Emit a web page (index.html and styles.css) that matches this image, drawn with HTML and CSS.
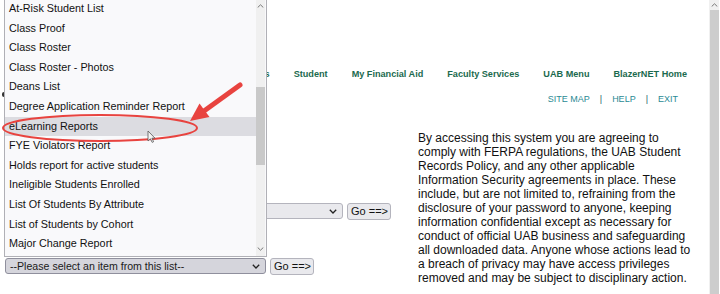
FILE: index.html
```html
<!DOCTYPE html>
<html>
    <head>
        <meta charset="utf-8">
        <link rel="stylesheet" href="styles.css">
    </head>
    <body>
        <div id="window">
            <div id="page">
                <div class="nav-row">
                    <a class="nav-link">Employee Services</a>
                    <a class="nav-link">Student</a>
                    <a class="nav-link">My Financial Aid</a>
                    <a class="nav-link">Faculty Services</a>
                    <a class="nav-link">UAB Menu</a>
                    <a class="nav-link">BlazerNET Home</a>
                </div>
                <div class="sub-row">
                    <div class="site-title"></div>
                    <div class="util-links">
                        <a>SITE MAP</a><span class="sep">|</span><a>HELP</a><span class="sep">|</span><a>EXIT</a>
                    </div>
                </div>
                <div class="main">
                    <div class="forms">
                        <div class="form-row first">
                            <div class="select wide">
                                <span></span>
                                <svg class="chev" width="8" height="5" viewBox="0 0 8 5"><path d="M0.8 0.8 L4 4 L7.2 0.8" fill="none" stroke="#222" stroke-width="1.3"/></svg>
                            </div>
                            <button class="go">Go ==&gt;</button>
                        </div>
                        <div class="form-row second">
                            <div class="select open">
                                <span>--Please select an item from this list--</span>
                                <svg class="chev" width="8" height="5" viewBox="0 0 8 5"><path d="M0.8 0.8 L4 4 L7.2 0.8" fill="none" stroke="#222" stroke-width="1.3"/></svg>
                            </div>
                            <button class="go">Go ==&gt;</button>
                        </div>
                    </div>
                    <p class="notice">By accessing this system you are agreeing to comply with FERPA regulations, the UAB Student Records Policy, and any other applicable Information Security agreements in place. These include, but are not limited to, refraining from the disclosure of your password to anyone, keeping information confidential except as necessary for conduct of official UAB business and safeguarding all downloaded data. Anyone whose actions lead to a breach of privacy may have access privileges removed and may be subject to disciplinary action.</p>
                </div>

                <!-- open dropdown of the second select -->
                <div class="dropdown">
                    <ul class="options">
                        <li>At-Risk Student List</li>
                        <li>Class Proof</li>
                        <li>Class Roster</li>
                        <li>Class Roster - Photos</li>
                        <li>Deans List</li>
                        <li>Degree Application Reminder Report</li>
                        <li class="hover">eLearning Reports</li>
                        <li>FYE Violators Report</li>
                        <li>Holds report for active students</li>
                        <li>Ineligible Students Enrolled</li>
                        <li>List Of Students By Attribute</li>
                        <li>List of Students by Cohort</li>
                        <li>Major Change Report</li>
                    </ul>
                    <div class="dd-scroll">
                        <div class="dd-arrow">
                            <svg width="7" height="4" viewBox="0 0 7 4"><path d="M0.7 3.5 L3.5 0.8 L6.3 3.5" fill="none" stroke="#777" stroke-width="1"/></svg>
                        </div>
                        <div class="dd-thumb"></div>
                        <div class="dd-fill"></div>
                        <div class="dd-arrow">
                            <svg width="7" height="4" viewBox="0 0 7 4"><path d="M0.7 0.5 L3.5 3.2 L6.3 0.5" fill="none" stroke="#777" stroke-width="1"/></svg>
                        </div>
                    </div>
                </div>

                <!-- annotation drawn over the screenshot -->
                <svg class="markup" width="710" height="294" viewBox="0 0 710 294">
                    <ellipse cx="100" cy="128" rx="97" ry="13" fill="none" stroke="#e8433f" stroke-width="2"/>
                    <line x1="240" y1="85" x2="204" y2="111" stroke="#e8433f" stroke-width="5" stroke-linecap="round"/>
                    <polygon points="190,121 199.5,103.5 209.5,117" fill="#e8433f"/>
                    <path d="M148 131 L148 141 L150.4 138.8 L152.2 142.4 L153.6 141.7 L151.9 138.2 L155 138.2 Z" fill="#f4f4f4" stroke="#555" stroke-width="0.8"/>
                </svg>
            </div>
            <div class="scrollbar">
                <div class="sb-arrow">
                    <svg width="7" height="4" viewBox="0 0 7 4"><path d="M0.7 3.5 L3.5 0.8 L6.3 3.5" fill="none" stroke="#777" stroke-width="1"/></svg>
                </div>
                <div class="sb-thumb"></div>
            </div>
        </div>
    </body>
</html>
```
FILE: styles.css
```css
html, body {
    margin: 0;
    height: 100%;
}
body {
    background: #fff;
    font-family: "Liberation Sans", Arial, sans-serif;
    overflow: hidden;
}
#window {
    display: flex;
    height: 294px;
}
#page {
    position: relative;
    flex: 1;
    overflow: hidden;
}

/* top navigation */
.nav-row {
    display: flex;
    justify-content: flex-end;
    gap: 24px;
    margin-top: 68px;
    padding-right: 22px;
    font-size: 9.15px;
    font-weight: bold;
    line-height: 12px;
}
.nav-link {
    color: #1b6a4e;
    white-space: nowrap;
}
.sub-row {
    display: flex;
    justify-content: space-between;
    align-items: flex-start;
    margin-top: 13px;
    line-height: 12px;
}
.site-title {
    width: 2px;
    height: 5px;
    margin: -1px 0 0 2px;
    border-left: 2px solid #333;
    border-radius: 2px 0 0 2px;
}
.util-links {
    display: flex;
    gap: 10px;
    padding-right: 31px;
    font-size: 9px;
    color: #2a8a94;
}
.util-links .sep {
    color: #1f5f6e;
}

/* main area */
.main {
    display: flex;
    justify-content: space-between;
    padding-right: 15px;
}
.forms {
    padding-left: 5px;
}
.form-row {
    display: flex;
    align-items: flex-start;
    gap: 4px;
}
.form-row.first {
    margin-top: 98px;
}
.form-row.second {
    margin-top: 38px;
}
.select {
    box-sizing: border-box;
    display: flex;
    align-items: center;
    justify-content: space-between;
    height: 16px;
    padding: 0 4px 0 4px;
    border: 1px solid #b4b4bd;
    border-radius: 3px;
    background: #e9e9ed;
    font-size: 10.6px;
    color: #1a1a1a;
    white-space: nowrap;
}
.select.wide {
    width: 338px;
}
.select.open {
    width: 261px;
    background: #d5d5dc;
    border-color: #8f8f9d;
}
.chev {
    display: block;
    margin-right: 1px;
}
.go {
    box-sizing: border-box;
    width: 44px;
    height: 17px;
    margin: 0;
    padding: 0 3px;
    border: 1px solid #b4b4bd;
    border-radius: 3px;
    background: #e9e9ed;
    font-family: "Liberation Sans", Arial, sans-serif;
    font-size: 11px;
    line-height: 15px;
    color: #111;
    white-space: nowrap;
}
.notice {
    width: 276px;
    margin: 26px 0 0 0;
    font-size: 12px;
    line-height: 14px;
    color: #111;
}

/* open list of the select */
.dropdown {
    position: absolute;
    left: 4px;
    top: -2px;
    box-sizing: border-box;
    width: 263px;
    height: 259px;
    display: flex;
    border: 1px solid #b0b0b6;
    background: #f9f9fb;
}
.options {
    flex: 1;
    list-style: none;
    margin: 0;
    padding: 0;
    font-size: 10.8px;
    color: #111;
}
.options li {
    height: 19.6px;
    line-height: 19.6px;
    padding-left: 4px;
    white-space: nowrap;
}
.options li.hover {
    background: #dcdce1;
}
.dd-scroll {
    width: 9px;
    margin-right: 1px;
    display: flex;
    flex-direction: column;
    align-items: center;
    background: #f0f0f0;
}
.dd-arrow {
    height: 14px;
    display: flex;
    align-items: center;
}
.dd-thumb {
    width: 9px;
    height: 78px;
    margin-top: 74px;
    background: #c9c9c9;
}
.dd-fill {
    flex: 1;
}

.markup {
    position: absolute;
    left: 0;
    top: 0;
    pointer-events: none;
}

/* window scrollbar */
.scrollbar {
    width: 10px;
    margin-right: 1px;
    display: flex;
    flex-direction: column;
    align-items: center;
    background: #f0f0f0;
}
.sb-arrow {
    height: 10px;
    display: flex;
    align-items: center;
}
.sb-thumb {
    flex: 1;
    width: 9px;
    background: #cdcdcd;
}
```
